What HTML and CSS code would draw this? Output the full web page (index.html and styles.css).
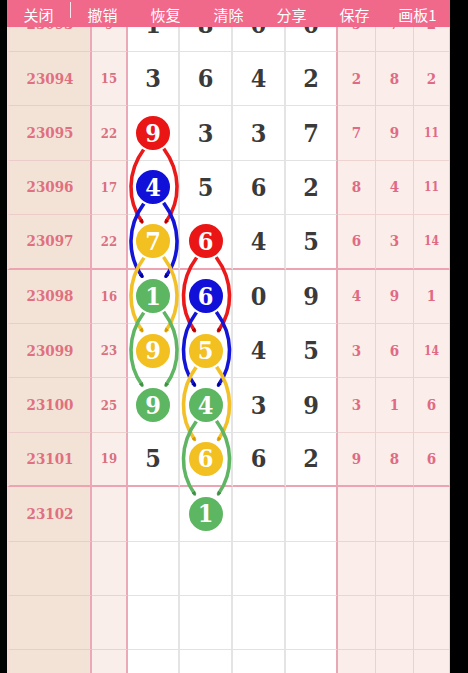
FILE: index.html
```html
<!DOCTYPE html>
<html lang="zh">
<head>
<meta charset="utf-8">
<title>画板</title>
<link rel="stylesheet" href="styles.css">
</head>
<body>
<div class="screen">
  <div class="toolbar">
    <span class="tb-item">关闭</span>
    <span class="tb-sep"></span>
    <span class="tb-item">撤销</span>
    <span class="tb-item">恢复</span>
    <span class="tb-item">清除</span>
    <span class="tb-item">分享</span>
    <span class="tb-item">保存</span>
    <span class="tb-item">画板1</span>
  </div>
  <div class="viewport">
  <div class="board">
    <svg class="links" width="443" height="710" viewBox="0 0 443 710">
      <defs>
        <marker id="ar" viewBox="0 0 6 6" refX="3" refY="3" markerWidth="4.5" markerHeight="4.5" markerUnits="userSpaceOnUse" orient="auto"><path d="M0 0 L6 3 L0 6 Z" fill="#b00000"/></marker>
        <marker id="ab" viewBox="0 0 6 6" refX="3" refY="3" markerWidth="4.5" markerHeight="4.5" markerUnits="userSpaceOnUse" orient="auto"><path d="M0 0 L6 3 L0 6 Z" fill="#000090"/></marker>
        <marker id="ay" viewBox="0 0 6 6" refX="3" refY="3" markerWidth="4.5" markerHeight="4.5" markerUnits="userSpaceOnUse" orient="auto"><path d="M0 0 L6 3 L0 6 Z" fill="#d49a00"/></marker>
        <marker id="ag" viewBox="0 0 6 6" refX="3" refY="3" markerWidth="4.5" markerHeight="4.5" markerUnits="userSpaceOnUse" orient="auto"><path d="M0 0 L6 3 L0 6 Z" fill="#3e8e43"/></marker>
      </defs>
      <g class="arc red" marker-end="url(#ar)">
        <path d="M137 151 C120 174 120 202.8 135 223.8"/>
        <path d="M157 151 C174 174 174 202.8 159 223.8"/>
        <path d="M189.5 259.8 C172.5 282.8 172.5 311.6 187.5 332.6"/>
        <path d="M209.5 259.8 C226.5 282.8 226.5 311.6 211.5 332.6"/>
      </g>
      <g class="arc blue" marker-end="url(#ab)">
        <path d="M137 205.4 C120 228.4 120 257.2 135 278.2"/>
        <path d="M157 205.4 C174 228.4 174 257.2 159 278.2"/>
        <path d="M189.5 314.2 C172.5 337.2 172.5 366 187.5 387"/>
        <path d="M209.5 314.2 C226.5 337.2 226.5 366 211.5 387"/>
      </g>
      <g class="arc yellow" marker-end="url(#ay)">
        <path d="M137 259.8 C120 282.8 120 311.6 135 332.6"/>
        <path d="M157 259.8 C174 282.8 174 311.6 159 332.6"/>
        <path d="M189.5 368.6 C172.5 391.6 172.5 420.4 187.5 441.4"/>
        <path d="M209.5 368.6 C226.5 391.6 226.5 420.4 211.5 441.4"/>
      </g>
      <g class="arc green" marker-end="url(#ag)">
        <path d="M137 314.2 C120 337.2 120 366 135 387"/>
        <path d="M157 314.2 C174 337.2 174 366 159 387"/>
        <path d="M189.5 423 C172.5 446 172.5 474.8 187.5 495.8"/>
        <path d="M209.5 423 C226.5 446 226.5 474.8 211.5 495.8"/>
      </g>
    </svg>

    <div class="c id">23093</div><div class="c sum">9</div><div class="c n">1</div><div class="c n">8</div><div class="c n">0</div><div class="c n last">0</div><div class="c r">5</div><div class="c r">7</div><div class="c r">2</div>

    <div class="c id">23094</div><div class="c sum">15</div><div class="c n">3</div><div class="c n">6</div><div class="c n">4</div><div class="c n last">2</div><div class="c r">2</div><div class="c r">8</div><div class="c r">2</div>

    <div class="c id">23095</div><div class="c sum">22</div><div class="c n"><span class="ball red">9</span></div><div class="c n">3</div><div class="c n">3</div><div class="c n last">7</div><div class="c r">7</div><div class="c r">9</div><div class="c r sm">11</div>

    <div class="c id">23096</div><div class="c sum">17</div><div class="c n"><span class="ball blue">4</span></div><div class="c n">5</div><div class="c n">6</div><div class="c n last">2</div><div class="c r">8</div><div class="c r">4</div><div class="c r sm">11</div>

    <div class="c id sep">23097</div><div class="c sum sep">22</div><div class="c n sep"><span class="ball yellow">7</span></div><div class="c n sep"><span class="ball red">6</span></div><div class="c n sep">4</div><div class="c n last sep">5</div><div class="c r sep">6</div><div class="c r sep">3</div><div class="c r sm sep">14</div>

    <div class="c id">23098</div><div class="c sum">16</div><div class="c n"><span class="ball green">1</span></div><div class="c n"><span class="ball blue">6</span></div><div class="c n">0</div><div class="c n last">9</div><div class="c r">4</div><div class="c r">9</div><div class="c r">1</div>

    <div class="c id">23099</div><div class="c sum">23</div><div class="c n"><span class="ball yellow">9</span></div><div class="c n"><span class="ball yellow">5</span></div><div class="c n">4</div><div class="c n last">5</div><div class="c r">3</div><div class="c r">6</div><div class="c r sm">14</div>

    <div class="c id">23100</div><div class="c sum">25</div><div class="c n"><span class="ball green">9</span></div><div class="c n"><span class="ball green">4</span></div><div class="c n">3</div><div class="c n last">9</div><div class="c r">3</div><div class="c r">1</div><div class="c r">6</div>

    <div class="c id sep">23101</div><div class="c sum sep">19</div><div class="c n sep">5</div><div class="c n sep"><span class="ball yellow">6</span></div><div class="c n sep">6</div><div class="c n last sep">2</div><div class="c r sep">9</div><div class="c r sep">8</div><div class="c r sep">6</div>

    <div class="c id">23102</div><div class="c sum"></div><div class="c n"></div><div class="c n"><span class="ball green">1</span></div><div class="c n"></div><div class="c n last"></div><div class="c r"></div><div class="c r"></div><div class="c r"></div>

    <div class="c id"></div><div class="c sum"></div><div class="c n"></div><div class="c n"></div><div class="c n"></div><div class="c n last"></div><div class="c r"></div><div class="c r"></div><div class="c r"></div>

    <div class="c id"></div><div class="c sum"></div><div class="c n"></div><div class="c n"></div><div class="c n"></div><div class="c n last"></div><div class="c r"></div><div class="c r"></div><div class="c r"></div>

    <div class="c id"></div><div class="c sum"></div><div class="c n"></div><div class="c n"></div><div class="c n"></div><div class="c n last"></div><div class="c r"></div><div class="c r"></div><div class="c r"></div>
  </div>
  </div>
</div>
</body>
</html>
```
FILE: styles.css
```css
html, body {
  margin: 0;
  padding: 0;
  background: #000;
}

.screen {
  width: 468px;
  height: 673px;
  overflow: hidden;
  background: #000;
}

.toolbar {
  margin-left: 7px;
  width: 443px;
  height: 27px;
  display: flex;
  align-items: flex-start;
  background: #f0688a;
  font-family: "Noto Sans CJK SC", "Noto Sans", sans-serif;
  font-size: 15px;
  color: #fff;
}

.tb-item {
  width: 63px;
  padding-top: 3px;
  line-height: 24px;
  text-align: center;
  white-space: nowrap;
}

.tb-sep {
  width: 1px;
  height: 16px;
  margin-top: 2px;
  background: rgba(255, 255, 255, 0.85);
}

.viewport {
  margin-left: 7px;
  width: 443px;
  height: 646px;
  overflow: hidden;
}

.board {
  position: relative;
  margin-top: -29.4px;
  width: 443px;
  display: grid;
  grid-template-columns: 85px 36px 52px 53px 53px 52px 38px 38px 36px;
  grid-auto-rows: 54.4px;
  font-family: "DejaVu Serif", "Liberation Serif", serif;
  font-weight: bold;
  font-stretch: condensed;
}

.links {
  position: absolute;
  left: 0;
  top: 0;
  z-index: 1;
  pointer-events: none;
}

.arc path {
  fill: none;
  stroke-width: 3.6;
  stroke-linecap: round;
}

.arc.red path { stroke: #ea1a1a; }
.arc.blue path { stroke: #1414d6; }
.arc.yellow path { stroke: #f2c12a; }
.arc.green path { stroke: #5fb564; }

.c {
  box-sizing: border-box;
  display: flex;
  align-items: center;
  justify-content: center;
  border-bottom: 1px solid #e3e3e3;
  border-right: 1px solid #e3e3e3;
}

.c.id {
  background: #f3e3d7;
  color: #e0707f;
  font-size: 15px;
  border-left: 3px solid #f7d9d6;
  border-bottom-color: #ecccc8;
  border-right: 2px solid #eba8b6;
}

.c.sum {
  background: #f9eeea;
  color: #d9707f;
  font-size: 13px;
  border-bottom-color: #ecd2cf;
  border-right: 2px solid #eba8b6;
}

.c.n {
  background: #fff;
  color: #3a3a3a;
  font-size: 25px;
  border-bottom-color: #e2e2e2;
  border-right: 2px solid #e4e4e4;
}

.c.n.last {
  border-right: 2px solid #e9a6b4;
}

.c.r {
  background: #fbedea;
  color: #e06a85;
  font-size: 15px;
  border-bottom-color: #eed3d0;
  border-right: 1px solid #efd0d0;
}

.c.r.sm {
  font-size: 12px;
}

.c.sep {
  border-bottom: 2px solid #eca4b3;
}

.ball {
  position: relative;
  z-index: 2;
  box-sizing: border-box;
  width: 38px;
  height: 38px;
  border-radius: 50%;
  border: 2px solid #fff;
  display: flex;
  align-items: center;
  justify-content: center;
  color: #fff;
  font-size: 25px;
  line-height: 1;
}

.ball.red { background: #ea1515; }
.ball.blue { background: #1010d8; }
.ball.yellow { background: #f2c020; }
.ball.green { background: #5db662; }
```
